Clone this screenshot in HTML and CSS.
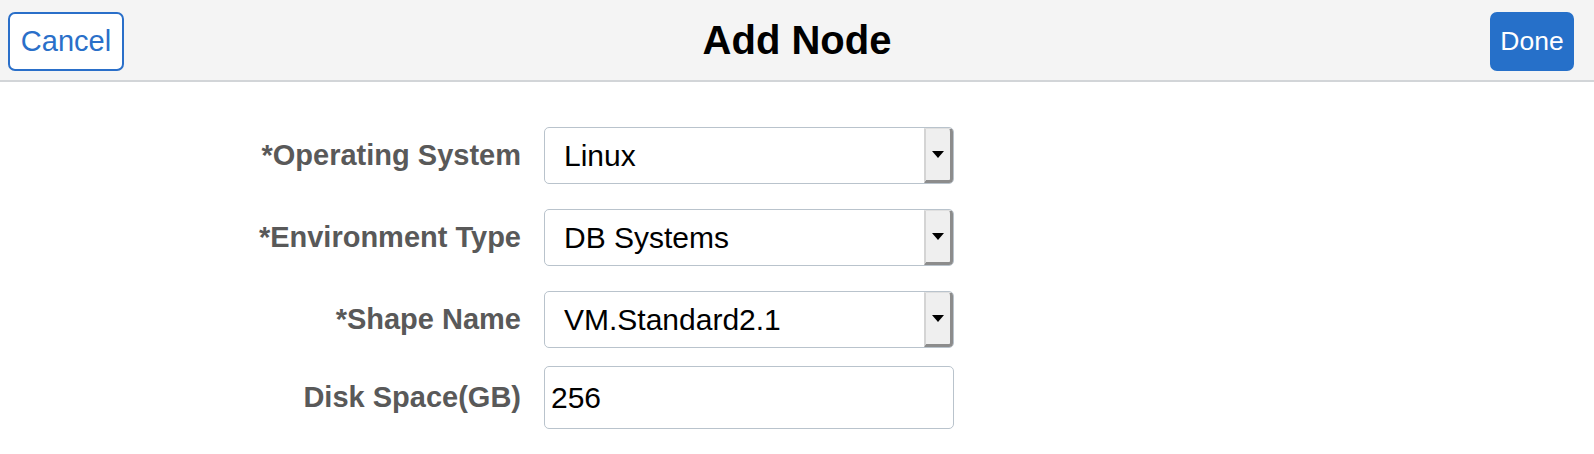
FILE: index.html
```html
<!DOCTYPE html>
<html>
<head>
<meta charset="utf-8">
<link rel="stylesheet" href="styles.css">
</head>
<body>
<header class="bar">
  <div class="side"><button class="btn btn-cancel">Cancel</button></div>
  <h1 class="title">Add Node</h1>
  <div class="side side-right"><button class="btn btn-done">Done</button></div>
</header>
<main class="form">
  <div class="row">
    <label class="lbl">*Operating System</label>
    <div class="select"><span class="val">Linux</span><span class="drop"><span class="arrow"></span></span></div>
  </div>
  <div class="row">
    <label class="lbl">*Environment Type</label>
    <div class="select"><span class="val">DB Systems</span><span class="drop"><span class="arrow"></span></span></div>
  </div>
  <div class="row">
    <label class="lbl">*Shape Name</label>
    <div class="select"><span class="val">VM.Standard2.1</span><span class="drop"><span class="arrow"></span></span></div>
  </div>
  <div class="row row-tight">
    <label class="lbl">Disk Space(GB)</label>
    <div class="input"><span class="val">256</span></div>
  </div>
</main>
</body>
</html>
```
FILE: styles.css
```css
* { box-sizing: border-box; }
html, body { margin: 0; padding: 0; background: #fff; }
body { font-family: "Liberation Sans", Arial, sans-serif; }
.bar {
  height: 82px;
  background: #f4f4f4;
  border-bottom: 2px solid #d2d5d8;
  display: grid;
  grid-template-columns: 1fr auto 1fr;
  align-items: start;
  padding: 12px 20px 0 20px;
}
.side { display: flex; }
.side-right { justify-content: flex-end; }
.btn {
  height: 59px;
  font-family: "Liberation Sans", Arial, sans-serif;
  border-radius: 7px;
  padding: 0;
  cursor: pointer;
}
.btn-cancel { background: #fff; color: #2a6fc9; border: 2px solid #2a6fc9; width: 116px; font-size: 29px; margin-left: -12px; }
.btn-done { background: #2670c9; color: #fff; border: 2px solid #2670c9; width: 84px; font-size: 26.5px; }
.title {
  margin: 0;
  font-size: 40px;
  font-weight: bold;
  color: #000;
  line-height: 57px;
}
.form {
  display: flex;
  flex-direction: column;
  padding-top: 45px;
}
.row {
  display: flex;
  align-items: center;
  gap: 23px;
  margin-bottom: 25px;
}
.row-tight { margin-top: -7px; }
.lbl {
  width: 521px;
  text-align: right;
  font-size: 29px;
  font-weight: bold;
  color: #595959;
}
.select, .input {
  width: 410px;
  height: 57px;
  border: 1.5px solid #b9c3cc;
  border-radius: 5px;
  display: flex;
  align-items: center;
  font-size: 30px;
  color: #000;
  background: #fff;
}
.select .val { padding-left: 19px; flex: 1; }
.input .val { padding-left: 6px; }
.input { height: 63px; }
.drop {
  align-self: stretch;
  width: 29px;
  background: #efefef;
  border-left: 2px solid #d4d4d4;
  border-right: 3px solid #8c8c8c;
  border-bottom: 3px solid #8c8c8c;
  border-top: 1px solid #e0e0e0;
  border-radius: 0 4px 4px 0;
  display: flex;
  align-items: center;
  justify-content: center;
}
.arrow {
  width: 0; height: 0;
  border-left: 6px solid transparent;
  border-right: 6px solid transparent;
  border-top: 7px solid #000;
}
```
